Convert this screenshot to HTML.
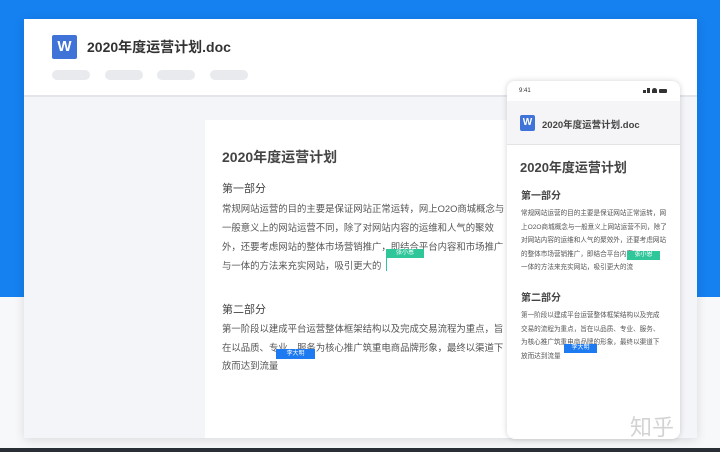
<!DOCTYPE html>
<html><head><meta charset="utf-8"><style>
*{margin:0;padding:0;box-sizing:border-box}
body{width:720px;height:452px;overflow:hidden;position:relative;background:#f7f8fa;font-family:"Liberation Sans","Noto Sans CJK SC",sans-serif;color:#333}
.blue{position:absolute;left:0;top:0;width:720px;height:297px;background:#1580f0}
.bot{position:absolute;left:0;top:448px;width:720px;height:4px;background:#2a2f36}
.card{position:absolute;left:24px;top:19px;width:673px;height:419px;background:#f4f5f8;box-shadow:0 2px 10px rgba(0,0,0,.12);overflow:hidden}
.hdr{position:absolute;left:0;top:0;width:673px;height:78px;background:#fff;border-bottom:2px solid #e3e5ea}
.w{position:absolute;background:#3f73d8;color:#fff;font-weight:bold;text-align:center;border-radius:2px}
.pill{position:absolute;top:51px;width:38px;height:10px;border-radius:5px;background:#e9eaee}
.page{position:absolute;left:181px;top:101px;width:320px;height:330px;background:#fff}
.t{position:absolute;white-space:nowrap}
.tag{position:absolute;color:#fff;font-size:6px;text-align:center}
.phone{position:absolute;left:507px;top:81px;width:173px;height:358px;background:#fff;border-radius:8px;box-shadow:0 0 6px rgba(0,0,0,.18);overflow:hidden}
.ph{position:absolute;left:0;top:20px;width:173px;height:44px;background:#f5f5f7;border-bottom:1px solid #e3e3e6}
.p p{font-size:6.6px;line-height:13.5px;color:#555;white-space:nowrap}
.mp{position:absolute;left:17px;font-size:9.4px;line-height:19px;color:#555;white-space:nowrap}
</style></head><body>
<div class="blue"></div>
<div class="bot"></div>
<div class="card">
 <div class="hdr">
  <div class="w" style="left:28px;top:16px;width:25px;height:24px;font-size:15px;line-height:24px">W</div>
  <div class="t" style="left:63px;top:18px;font-size:14px;font-weight:bold;color:#333">2020年度运营计划.doc</div>
  <div class="pill" style="left:28px"></div><div class="pill" style="left:81px"></div><div class="pill" style="left:133px"></div><div class="pill" style="left:186px"></div>
 </div>
 <div class="page">
  <div class="t" style="left:17px;top:27px;font-size:14px;font-weight:bold;color:#444">2020年度运营计划</div>
  <div class="t" style="left:17px;top:60px;font-size:11px;color:#444">第一部分</div>
  <div class="mp" style="top:79px">常规网站运营的目的主要是保证网站正常运转，网上O2O商城概念与<br>一般意义上的网站运营不同，除了对网站内容的运维和人气的聚效<br>外，还要考虑网站的整体市场营销推广，即结合平台内容和市场推广<br>与一体的方法来充实网站，吸引更大的</div>
  <div class="tag" style="left:181px;top:129px;width:38px;height:9px;background:#2fc79a;line-height:9px">张小恩</div>
  <div style="position:absolute;left:181px;top:138px;width:1px;height:13px;background:#2fc79a"></div>
  <div class="t" style="left:17px;top:181px;font-size:11px;color:#444">第二部分</div>
  <div class="mp" style="top:200px;line-height:18.5px">第一阶段以建成平台运营整体框架结构以及完成交易流程为重点，旨<br>在以品质、专业、服务为核心推广筑重电商品牌形象，最终以渠道下<br>放而达到流量</div>
  <div class="tag" style="left:71px;top:229px;width:39px;height:10px;background:#1d7af0;line-height:10px">李大明</div>
 </div>
</div>
<div class="phone">
 <div class="t" style="left:12px;top:7px;font-size:6px;color:#333">9:41</div>
 <div style="position:absolute;left:136px;top:9px;width:3px;height:3px;background:#333"></div>
 <div style="position:absolute;left:140px;top:7px;width:3px;height:5px;background:#333"></div>
 <div style="position:absolute;left:145px;top:7px;width:5px;height:5px;background:#333;border-radius:5px 5px 0 0"></div>
 <div style="position:absolute;left:152px;top:8px;width:8px;height:4px;background:#333;border-radius:1px"></div>
 <div class="ph">
  <div class="w" style="left:13px;top:14px;width:15px;height:16px;font-size:10px;line-height:16px">W</div>
  <div class="t" style="left:35px;top:16px;font-size:9.5px;font-weight:bold;color:#444">2020年度运营计划.doc</div>
 </div>
 <div class="p">
  <div class="t" style="left:13px;top:76px;font-size:13px;font-weight:bold;color:#444">2020年度运营计划</div>
  <div class="t" style="left:14px;top:106px;font-size:10px;font-weight:bold;color:#444">第一部分</div>
  <p style="position:absolute;left:14px;top:126px">常规网站运营的目的主要是保证网站正常运转，网<br>上O2O商城概念与一般意义上网站运营不同，除了<br>对网站内容的运维和人气的聚效外，还要考虑网站<br>的整体市场营销推广，即结合平台内容和<br>一体的方法来充实网站，吸引更大的流</p>
  <div class="tag" style="left:120px;top:170px;width:33px;height:9px;background:#2fc79a;line-height:9px">张小恩</div>
  <div class="t" style="left:14px;top:208px;font-size:10px;font-weight:bold;color:#444">第二部分</div>
  <p style="position:absolute;left:14px;top:228px">第一阶段以建成平台运营整体框架结构以及完成<br>交易的流程为重点，旨在以品质、专业、服务、<br>为核心推广筑重电商品牌的形象，最终以渠道下<br>放而达到流量</p>
  <div class="tag" style="left:57px;top:263px;width:33px;height:9px;background:#1d7af0;line-height:9px">李大明</div>
 </div>
</div>
<div class="t" style="left:630px;top:410px;font-size:22px;color:rgba(200,200,200,.8)">知乎</div>
</body></html>
